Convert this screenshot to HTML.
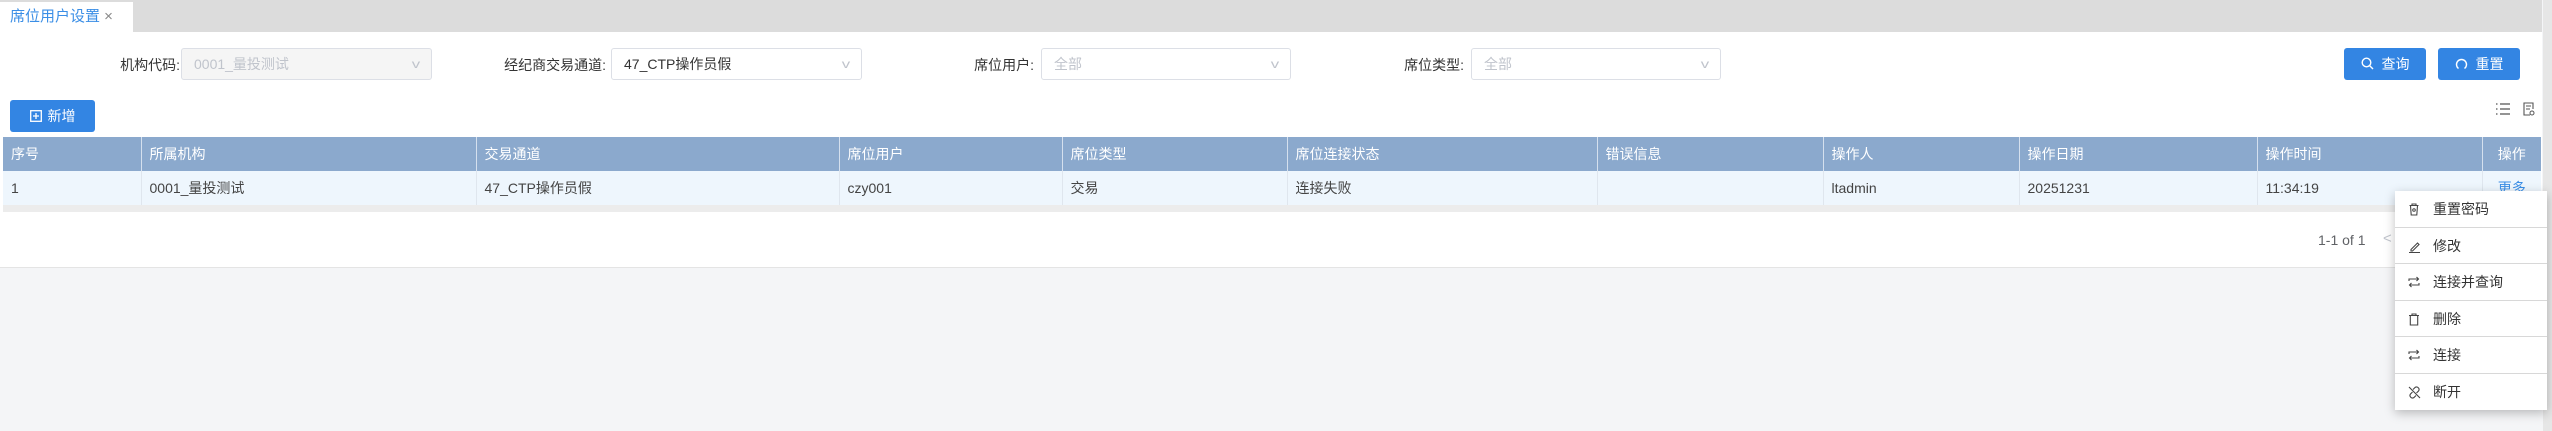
<!DOCTYPE html>
<html><head><meta charset="utf-8"><style>
*{box-sizing:border-box;margin:0;padding:0}
body{width:2552px;height:431px;overflow:hidden;background:#f4f5f7;font-family:"Liberation Sans","Noto Sans CJK SC",sans-serif;font-size:14px;color:#333;position:relative}
.a{position:absolute}
.tabbar{left:0;top:0;width:2542px;height:32px;background:#dcdcdc}
.tab{left:0;top:2px;width:133px;height:30px;background:#fff;color:#3a8ee6;font-size:15px;line-height:30px;padding-left:10px}
.card{left:0;top:32px;width:2542px;height:236px;background:#fff;border-bottom:1px solid #e4e4e4}
.sb{left:2543px;top:0;width:9px;height:431px;background:#e6e6e6}
.lbl{font-size:14px;color:#333;top:55px;text-align:right}
.box{top:48px;height:32px;border:1px solid #dcdfe6;border-radius:3px;background:#fff;font-size:14px;line-height:30px;padding-left:12px;color:#c0c4cc}
.box .ch{position:absolute;right:12px;top:0;color:#c0c4cc;font-size:12px;transform:scaleX(1.4)}
.btn{background:#3385e3;color:#fff;border-radius:3px;font-size:14px;text-align:center;line-height:32px}
table{border-collapse:collapse;position:absolute;left:3px;top:137px;width:2538px;font-size:14px}
th{background:#8ba9cd;color:#fff;font-weight:normal;text-align:left;height:34px;padding-left:8px;border-right:1px solid #d5e0ee}
td{background:#eef6fd;height:34px;padding-left:8px;border-right:1px solid #dfe6ee;color:#444}
.menu{left:2395px;top:191px;width:152px;height:219px;background:#fff;box-shadow:0 3px 10px rgba(0,0,0,.25)}
.mi{height:36.5px;border-bottom:1px solid #d8d8d8;font-size:14px;line-height:36px;padding-left:38px;position:relative;color:#333}
.mi:last-child{border-bottom:none}
.mi svg{position:absolute;left:13px;top:12px}
</style></head><body>
<div class="a tabbar"></div>
<div class="a tab">席位用户设置 <span style="color:#888">×</span></div>
<div class="a card"></div>
<div class="a sb"></div>

<div class="a lbl" style="left:100px;width:80px">机构代码:</div>
<div class="a box" style="left:181px;width:251px;background:#f5f5f5">0001_量投测试<span class="ch">v</span></div>
<div class="a lbl" style="left:480px;width:126px">经纪商交易通道:</div>
<div class="a box" style="left:611px;width:251px;color:#333">47_CTP操作员假<span class="ch">v</span></div>
<div class="a lbl" style="left:950px;width:84px">席位用户:</div>
<div class="a box" style="left:1041px;width:250px">全部<span class="ch">v</span></div>
<div class="a lbl" style="left:1380px;width:84px">席位类型:</div>
<div class="a box" style="left:1471px;width:250px">全部<span class="ch">v</span></div>

<div class="a btn" style="left:2344px;top:48px;width:82px;height:32px"><svg width="13" height="13" viewBox="0 0 13 13" style="vertical-align:-1px;margin-right:8px"><circle cx="5.5" cy="5.5" r="4.3" fill="none" stroke="#fff" stroke-width="1.4"/><path d="M8.6 8.6L12 12" stroke="#fff" stroke-width="1.4"/></svg>查询</div>
<div class="a btn" style="left:2438px;top:48px;width:82px;height:32px"><svg width="13" height="13" viewBox="0 0 13 13" style="vertical-align:-1px;margin-right:8px"><path d="M3.5 11.5A5 5 0 1 1 9.5 11.5" fill="none" stroke="#fff" stroke-width="1.4"/></svg>重置</div>
<div class="a btn" style="left:10px;top:100px;width:85px;height:32px"><svg width="12" height="12" viewBox="0 0 12 12" style="vertical-align:-1px;margin-right:6px"><rect x=".7" y=".7" width="10.6" height="10.6" fill="none" stroke="#fff" stroke-width="1.3"/><path d="M6 3v6M3 6h6" stroke="#fff" stroke-width="1.3"/></svg>新增</div>

<svg class="a" style="left:2496px;top:103px" width="14" height="12" viewBox="0 0 14 12"><path d="M0 1h1.5M0 6h1.5M0 11h1.5M4 1h10M4 6h10M4 11h10" stroke="#555" stroke-width="1.2"/></svg>
<svg class="a" style="left:2523px;top:102px" width="12" height="14" viewBox="0 0 12 14"><path d="M7 13H1V1h9v6" fill="none" stroke="#555" stroke-width="1.1"/><path d="M3 4h5M3 7h4" stroke="#555"/><circle cx="9" cy="11" r="2" fill="none" stroke="#555"/></svg>

<table><tr>
<th style="width:138px">序号</th><th style="width:335px">所属机构</th><th style="width:363px">交易通道</th><th style="width:223px">席位用户</th><th style="width:225px">席位类型</th><th style="width:310px">席位连接状态</th><th style="width:226px">错误信息</th><th style="width:196px">操作人</th><th style="width:238px">操作日期</th><th style="width:225px">操作时间</th><th style="text-align:center;padding-left:0;border-right:none">操作</th>
</tr><tr>
<td>1</td><td>0001_量投测试</td><td>47_CTP操作员假</td><td>czy001</td><td>交易</td><td>连接失败</td><td></td><td>ltadmin</td><td>20251231</td><td>11:34:19</td><td style="text-align:center;padding-left:0;color:#3a8ee6;border-right:none">更多</td>
</tr></table>
<div class="a" style="left:3px;top:205px;width:2538px;height:7px;background:#ececec"></div>

<div class="a" style="left:2318px;top:232px;color:#606266;font-size:14px">1-1 of 1</div>
<div class="a" style="left:2383px;top:230px;color:#c0c4cc;font-size:15px">&lt;</div>

<div class="a menu">
<div class="mi"><svg width="12" height="13" viewBox="0 0 12 13"><path d="M1.5 2.5h9M2.5 2.5l.7 9.5h5.6l.7-9.5M4 2.5V1h4v1.5" fill="none" stroke="#444" stroke-width="1.1"/><circle cx="6" cy="7" r="1.3" fill="none" stroke="#444"/></svg>重置密码</div>
<div class="mi"><svg width="13" height="13" viewBox="0 0 13 13"><path d="M3 9.5L9.5 3l1.5 1.5L4.5 11H3z M1 12.5h11" fill="none" stroke="#444" stroke-width="1.1"/></svg>修改</div>
<div class="mi"><svg width="12" height="12" viewBox="0 0 12 12"><path d="M1 5V3h9.5M8.5 1l2 2-2 2M11 7v2H1.5M3.5 11l-2-2 2-2" fill="none" stroke="#444" stroke-width="1.1"/></svg>连接并查询</div>
<div class="mi"><svg width="12" height="13" viewBox="0 0 12 13"><path d="M1 2.5h10M2.3 2.5v9.5h7.4V2.5M4 2.5V1h4v1.5" fill="none" stroke="#444" stroke-width="1.1"/></svg>删除</div>
<div class="mi"><svg width="12" height="12" viewBox="0 0 12 12"><path d="M1 5V3h9.5M8.5 1l2 2-2 2M11 7v2H1.5M3.5 11l-2-2 2-2" fill="none" stroke="#444" stroke-width="1.1"/></svg>连接</div>
<div class="mi"><svg width="13" height="13" viewBox="0 0 13 13"><path d="M5 3.5L7 1.5a2.5 2.5 0 0 1 3.5 3.5L8.5 7M8 9.5L6 11.5a2.5 2.5 0 0 1-3.5-3.5L4.5 6M1 1l11 11" fill="none" stroke="#444" stroke-width="1.1"/></svg>断开</div>
</div>
</body></html>
